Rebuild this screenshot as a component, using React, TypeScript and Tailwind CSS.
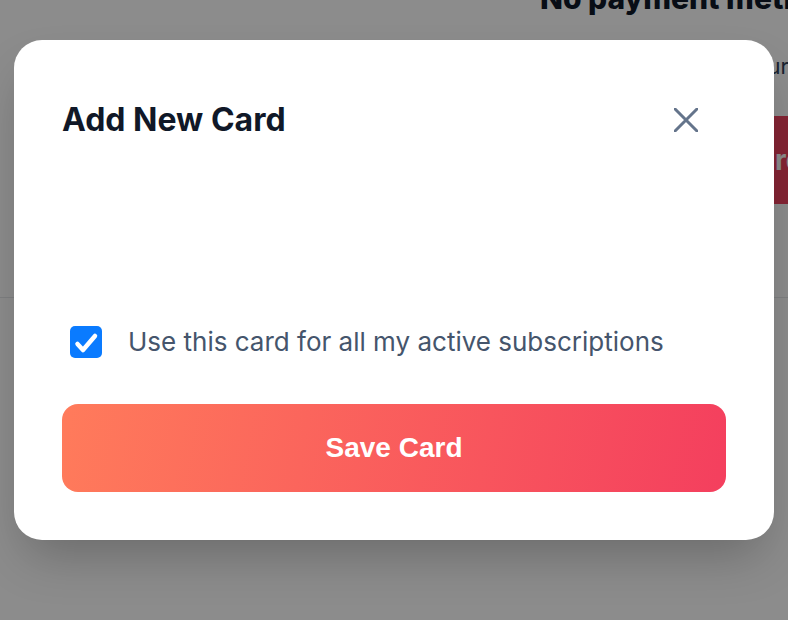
import { useState } from "react";

function CloseIcon() {
  return (
    <svg width="24" height="24" viewBox="0 0 24 24" fill="none">
      <path d="M1 1L23 23M23 1L1 23" stroke="#64748b" strokeWidth="3" strokeLinecap="round" />
    </svg>
  );
}

export default function App() {
  const [useForAll, setUseForAll] = useState(true);

  return (
    <div className="relative h-[620px] w-[788px] overflow-hidden bg-white font-['Inter','Noto_Sans',sans-serif]">
      {/* Page behind the modal */}
      <div className="flex flex-col">
        <h2 className="ml-[540px] -mt-[20px] whitespace-nowrap text-[30px] font-extrabold leading-9 text-gray-900">
          No payment methods
        </h2>
        <p className="ml-[741px] mt-[34px] whitespace-nowrap text-[22px] leading-8 text-slate-700">Your saved cards</p>
        <div className="ml-[774px] mt-[34px] flex h-[88px] w-[200px] items-center bg-[#f1435f] pl-[1px] text-[28px] font-bold text-white">
          rd
        </div>
        <div className="mt-[93px] h-px bg-gray-200" />
      </div>

      {/* Overlay */}
      <div className="absolute inset-0 flex justify-center bg-black/45 pt-10">
        <div className="flex h-[500px] w-[760px] flex-col rounded-[28px] bg-white p-12 shadow-2xl">
          <div className="flex h-16 items-center justify-between">
            <h3 className="text-[32px] font-bold leading-9 text-gray-900">Add New Card</h3>
            <button className="mr-7" aria-label="Close">
              <CloseIcon />
            </button>
          </div>

          {/* card element mount */}
          <div className="mt-6 h-[150px]" />

          <label className="ml-2 flex items-center gap-[26px]">
            <span
              onClick={() => setUseForAll(!useForAll)}
              className={`flex h-8 w-8 items-center justify-center rounded-[5px] ${useForAll ? "bg-[#0a7bff]" : "border-2 border-gray-400 bg-white"}`}
            >
              {useForAll && (
                <svg width="32" height="32" viewBox="0 0 32 32" fill="none">
                  <path d="M7.5 18L13 24L25 10" stroke="white" strokeWidth="4.5" strokeLinecap="round" strokeLinejoin="round" />
                </svg>
              )}
            </span>
            <span className="text-[26px] leading-8 text-slate-600">Use this card for all my active subscriptions</span>
          </label>

          <button className="mt-[46px] flex h-[88px] w-full items-center justify-center rounded-2xl bg-linear-[100deg] from-[#ff7b5b] to-[#f43f5e] font-['Liberation_Sans',Arial,sans-serif] text-[28px] font-bold text-white">
            Save Card
          </button>
        </div>
      </div>
    </div>
  );
}
